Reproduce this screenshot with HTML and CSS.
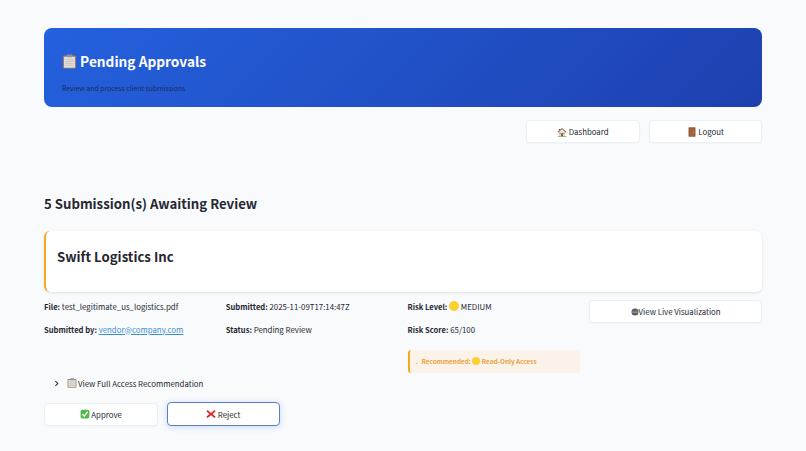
FILE: index.html
```html
<!DOCTYPE html>
<html lang="en">
<head>
<meta charset="utf-8">
<title>Pending Approvals</title>
<link rel="stylesheet" href="styles.css">
</head>
<body>
<svg class="defs" width="0" height="0" aria-hidden="true">
  <defs>
    <symbol id="clipboard" viewBox="0 0 16 16">
      <rect x="1" y="1.5" width="14" height="14" rx="1" fill="#a1785f"/>
      <rect x="2.2" y="3" width="11.6" height="11.6" fill="#e4e1d8"/>
      <path d="M3.5 6h9M3.5 8h9M3.5 10h9M3.5 12h9" stroke="#b9bdc0" stroke-width=".8"/>
      <rect x="5" y=".5" width="6" height="3" rx=".8" fill="#8d9499"/>
    </symbol>
    <symbol id="house" viewBox="0 0 16 16">
      <path d="M3 7h10v8H3z" fill="#e8d9bd"/>
      <path d="M.8 8 8 1.5 15.2 8l-1 1L8 3.6 1.8 9z" fill="#8a5a44"/>
      <path d="M3 3h2v2L3 6.5z" fill="#8a5a44"/>
      <rect x="6.6" y="10" width="2.8" height="5" fill="#7a4b38"/>
      <rect x="3.8" y="9.5" width="2" height="2" fill="#6aa7d8"/>
      <rect x="10.2" y="9.5" width="2" height="2" fill="#6aa7d8"/>
      <path d="M1 15h14v1H1z" fill="#6b9c4c"/>
    </symbol>
    <symbol id="door" viewBox="0 0 16 16">
      <rect x="2.5" y=".5" width="11" height="15" fill="#8b4f35"/>
      <rect x="4" y="2" width="8" height="12.5" fill="#a5623f"/>
      <circle cx="10.6" cy="8.5" r=".8" fill="#e7c25a"/>
    </symbol>
    <symbol id="moon" viewBox="0 0 16 16">
      <circle cx="8" cy="8" r="7.5" fill="#fbd22d"/>
      <circle cx="8" cy="8" r="7.5" fill="none" stroke="#f5b81c" stroke-width=".8"/>
    </symbol>
    <symbol id="eye" viewBox="0 0 16 16">
      <circle cx="8" cy="8" r="7" fill="#4b5158"/>
      <path d="M1.5 8.2h13" stroke="#d9dde0" stroke-width="1.4"/>
      <path d="M3 4.4h10M3 11.8h10" stroke="#8b9197" stroke-width="1"/>
    </symbol>
    <symbol id="check" viewBox="0 0 16 16">
      <rect x="1" y="1" width="14" height="14" rx="2.5" fill="#4fb848"/>
      <path d="M3.8 8.2 6.8 11.4 12.4 4.2" fill="none" stroke="#fff" stroke-width="2.2"/>
    </symbol>
    <symbol id="cross" viewBox="0 0 16 16">
      <path d="M2.5 1.5 8 6.2 13.5 1.5 15.5 3.6 10.4 8l5.1 4.4-2 2.1L8 9.8 2.5 14.5.5 12.4 5.6 8 .5 3.6z" fill="#e0242c"/>
    </symbol>
    <symbol id="chev" viewBox="0 0 16 16">
      <path d="M5.5 2.5 11 8 5.5 13.5" fill="none" stroke="#262730" stroke-width="2.4"/>
    </symbol>
  </defs>
</svg>

<main class="page">
  <header class="banner">
    <h1 class="banner-title"><svg class="ico ico-title"><use href="#clipboard"/></svg> Pending Approvals</h1>
    <p class="banner-sub">Review and process client submissions</p>
  </header>

  <nav class="nav-row">
    <button class="btn btn-nav" type="button"><svg class="ico"><use href="#house"/></svg> Dashboard</button>
    <button class="btn btn-nav" type="button"><svg class="ico"><use href="#door"/></svg> Logout</button>
  </nav>

  <h2 class="count">5 Submission(s) Awaiting Review</h2>

  <section class="card">
    <h3 class="card-title">Swift Logistics Inc</h3>
  </section>

  <section class="details">
    <div class="col">
      <p class="field"><b>File:</b> test_legitimate_us_logistics.pdf</p>
      <p class="field"><b>Submitted by:</b> <a href="#" class="mail">vendor@company.com</a></p>
    </div>
    <div class="col">
      <p class="field"><b>Submitted:</b> 2025-11-09T17:14:47Z</p>
      <p class="field"><b>Status:</b> Pending Review</p>
    </div>
    <div class="col">
      <p class="field"><b>Risk Level:</b> <svg class="ico"><use href="#moon"/></svg> MEDIUM</p>
      <p class="field"><b>Risk Score:</b> 65/100</p>
      <div class="rec"><span class="rec-dot">.</span>Recommended: <svg class="ico ico-small"><use href="#moon"/></svg> Read-Only Access</div>
    </div>
    <div class="col">
      <button class="btn btn-wide" type="button"><svg class="ico ico-small"><use href="#eye"/></svg>View Live Visualization</button>
    </div>
  </section>

  <div class="expander"><svg class="chev"><use href="#chev"/></svg><svg class="ico"><use href="#clipboard"/></svg><span>View Full Access Recommendation</span></div>

  <div class="actions">
    <button class="btn btn-nav" type="button"><svg class="ico"><use href="#check"/></svg> Approve</button>
    <button class="btn btn-nav btn-focus" type="button"><svg class="ico"><use href="#cross"/></svg> Reject</button>
  </div>
</main>
</body>
</html>
```
FILE: styles.css
```css
* { box-sizing: border-box; }
html, body { margin: 0; padding: 0; }
body {
  width: 806px;
  height: 451px;
  overflow: hidden;
  background: #f8fafc;
  color: #262730;
  font-family: "Noto Sans CJK SC", "Noto Sans", sans-serif;
  font-size: 7.85px;
}
.defs { position: absolute; }
.page { padding: 28px 44px 0; }
.ico { width: 10px; height: 10px; vertical-align: -1.5px; }
.ico-small { width: 8px; height: 8px; vertical-align: -1px; }
.ico-title { width: 15px; height: 15px; vertical-align: -2px; }

.banner {
  height: 79px;
  padding: 23px 18px 0;
  border-radius: 8px;
  background: linear-gradient(135deg, #2461de 0%, #1e40af 100%);
}
.banner-title {
  margin: 0;
  height: 20px;
  color: #fff;
  font-size: 13.7px;
  line-height: 20px;
  font-weight: 700;
}
.banner-sub {
  margin: 11px 0 0;
  color: #1a2b60;
  font-size: 6.85px;
  line-height: 12px;
}

.nav-row {
  display: flex;
  justify-content: flex-end;
  gap: 9px;
  margin-top: 13px;
}
.btn {
  height: 23px;
  padding: 0;
  border: 1px solid #edf0f3;
  border-radius: 4px;
  background: #fff;
  color: #262730;
  font: inherit;
  box-shadow: 0 1px 2px rgba(0, 0, 0, .03);
}
.btn-nav { width: 113.5px; }
.btn-wide { width: 100%; }
.btn-focus {
  height: 24px;
  border-color: #5a7fc9;
  box-shadow: 0 1px 6px rgba(37, 99, 235, .22);
}

.count {
  margin: 49.5px 0 0;
  font-size: 13.2px;
  line-height: 22px;
  font-weight: 700;
}

.card {
  height: 61px;
  margin-top: 16px;
  padding: 15px 11px 0;
  border-left: 2px solid #f5a623;
  border-radius: 6px;
  background: #fff;
  box-shadow: 0 1px 3px rgba(0, 0, 0, .1);
}
.card-title {
  margin: 0;
  font-size: 13.2px;
  line-height: 22px;
  font-weight: 700;
}

.details {
  display: grid;
  grid-template-columns: repeat(4, 1fr);
  column-gap: 9px;
  margin-top: 8px;
}
.field {
  margin: 0 0 9px;
  line-height: 14px;
}
.field b { font-size: 7.6px; font-weight: 700; }
.mail { color: #3d8fd1; }

.rec {
  height: 23px;
  margin-top: 13px;
  padding-left: 6px;
  border-left: 2px solid #f5a623;
  border-radius: 3px;
  background: #fbf2e9;
  color: #e9a23b;
  font-size: 6.4px;
  font-weight: 700;
  line-height: 23px;
}
.rec-dot { margin-right: 4px; }

.expander {
  display: flex;
  align-items: center;
  gap: 1px;
  margin-top: 3.5px;
  padding-left: 9px;
  height: 14px;
}
.chev { width: 7px; height: 7px; margin-right: 6px; }

.actions {
  display: flex;
  align-items: center;
  gap: 9px;
  margin-top: 12px;
}
```
